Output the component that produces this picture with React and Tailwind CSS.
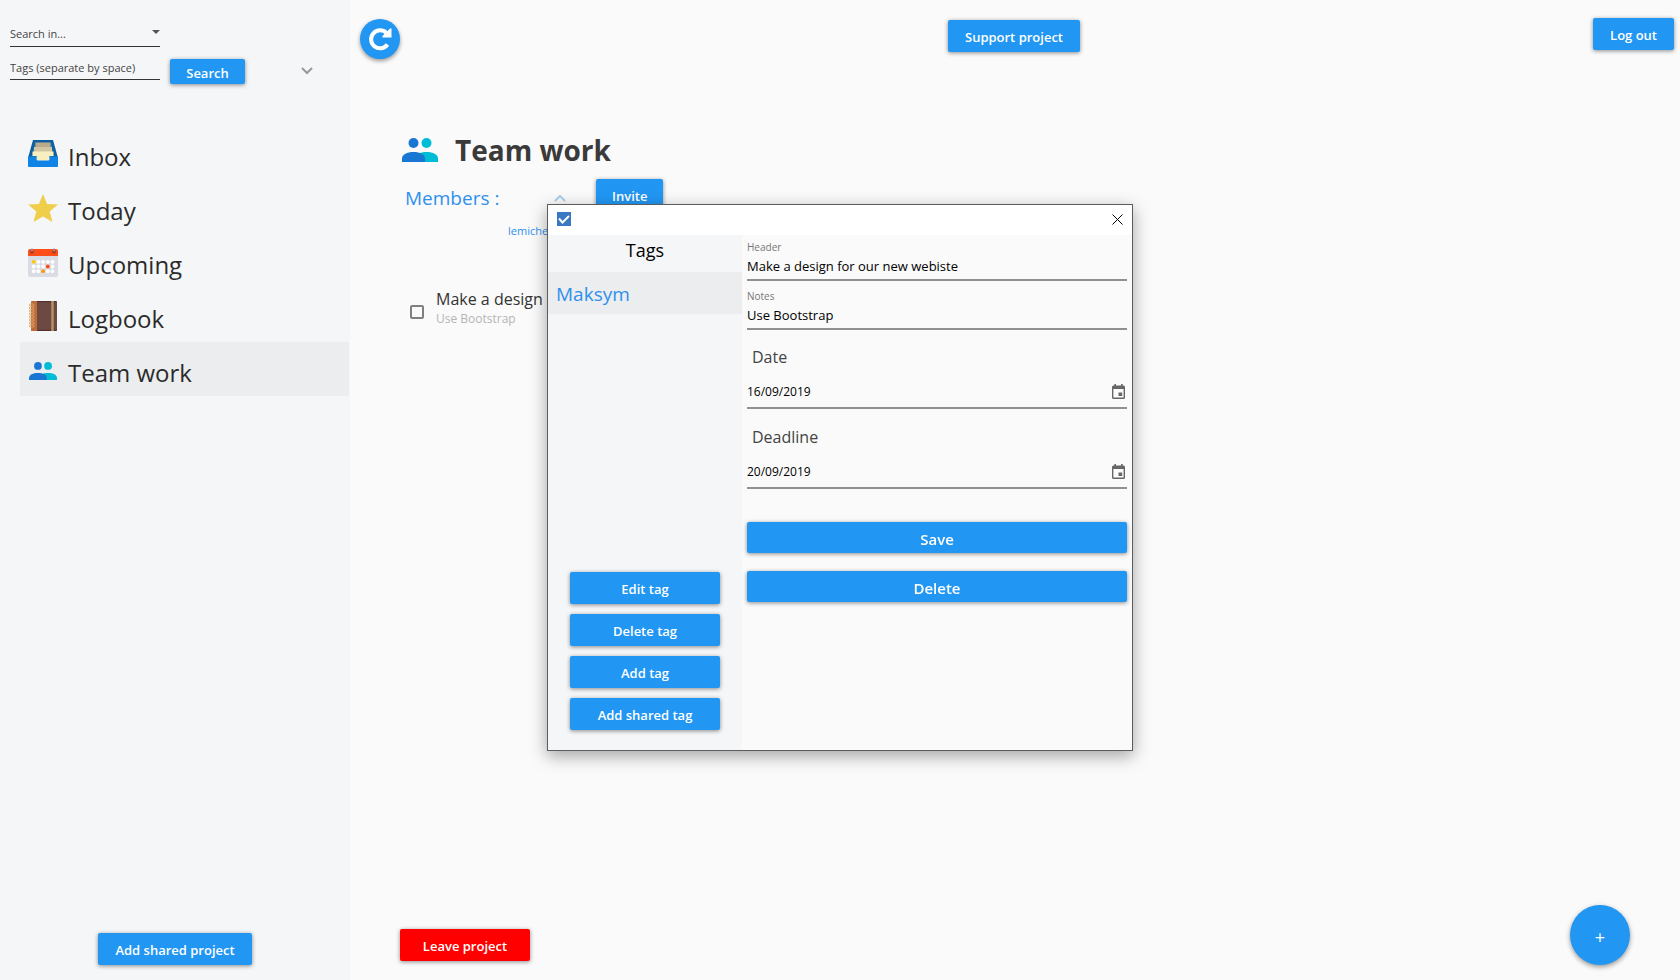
import React from "react";

function Button({ className = "", children }) {
  return (
    <button
      type="button"
      className={`flex items-center justify-center rounded-xs pt-1 font-semibold text-white shadow-[0_1px_4px_rgba(0,0,0,0.45)] ${className}`}
    >
      {children}
    </button>
  );
}

function InboxIcon() {
  return (
    <svg viewBox="0 0 30 30" className="mt-0.5 size-[30px] shrink-0" aria-hidden="true">
      <path d="M5 1h20l5 18H0z" fill="#0f5f9c" />
      <path d="M7 3.500h16l3.500 14h-23z" fill="#2b78ae" />
      <path d="M7.500 3.500h15v6h-15z" fill="#b9ab8c" />
      <path d="M6 8h18v6H6z" fill="#d2c5a2" />
      <path d="M4.500 12.500h21v4.500h-4v4.500h-13V17h-4z" fill="#f8efc0" />
      <path d="M0 17.500h8.500v2.500q0 1.500 1.500 1.500h10q1.500 0 1.500-1.500v-2.500H30V27q0 1-1 1H1q-1 0-1-1z" fill="#0f83e6" />
    </svg>
  );
}

function StarIcon() {
  return (
    <svg viewBox="0 0 30 30" className="mt-0.5 size-[30px] shrink-0" aria-hidden="true">
      <path d="M15 1l4.100 9.900L30 11.500l-8.300 7.100L24.500 29 15 23.400 5.500 29l2.800-10.400L0 11.500l10.900-.6z" fill="#efce4a" />
    </svg>
  );
}

function CalendarIcon() {
  const highlighted = { "0-0": "#ffc800", "1-3": "#ff4a1c", "2-2": "#ff9811" };
  const dots = [];
  for (let r = 0; r < 3; r++)
    for (let c = 0; c < 5; c++)
      dots.push(
        <circle
          key={`${r}-${c}`}
          cx={5.7 + c * 4.7}
          cy={14.8 + r * 4.7}
          r="1.900"
          fill={highlighted[`${r}-${c}`] || "#fff"}
        />
      );
  return (
    <svg viewBox="0 0 30 30" className="mt-0.5 size-[30px] shrink-0" aria-hidden="true">
      <path d="M0 8h30v20q0 2-2 2H2q-2 0-2-2z" fill="#d9dce2" />
      <path d="M0 9V4q0-2 2-2h26q2 0 2 2v5z" fill="#ff4f19" />
      <circle cx="4" cy="4.800" r="1.900" fill="#a43a20" />
      <circle cx="26" cy="4.800" r="1.900" fill="#a43a20" />
      <path d="M4 1.500v3M26 1.500v3" stroke="#8d9ba8" strokeWidth="1.600" />
      {dots}
    </svg>
  );
}

function BookIcon() {
  return (
    <svg viewBox="0 0 30 30" className="mt-0.5 size-[30px] shrink-0" aria-hidden="true">
      <rect x="3" y="0" width="26" height="30" rx="1.500" fill="#6d4a41" />
      <path d="M4.500 0H9v30H4.500Q3 30 3 28.500v-27Q3 0 4.500 0z" fill="#bf6a39" />
      <path d="M9 0h18.500Q29 0 29 1.200H9zM9 28.800h20q0 1.200-1.500 1.200H9z" fill="#54322c" />
      <path d="M23.200 0h2.600v30h-2.600z" fill="#b58e62" />
      {[4, 7, 10, 13, 16, 19, 22, 25].map((y) => (
        <ellipse key={y} cx="3.700" cy={y} rx="2.500" ry="1.200" fill="none" stroke="#d9a765" strokeWidth=".9" />
      ))}
    </svg>
  );
}

function PeopleIcon({ className }) {
  return (
    <svg viewBox="0 0 36 24" className={`shrink-0 ${className}`} aria-hidden="true">
      <circle cx="24.500" cy="5" r="5" fill="#00bcd4" />
      <path d="M13 24v-3.500c0-4 5-6.500 11.500-6.500S36 16.500 36 20.500V24z" fill="#00bcd4" />
      <circle cx="11.500" cy="5" r="5" fill="#1976d2" />
      <path d="M0 24v-3.500C0 16.500 5 14 11.500 14S23 16.500 23 20.500V24z" fill="#1976d2" />
    </svg>
  );
}

function Chevron({ up, className = "" }) {
  return (
    <svg viewBox="0 0 12 8" className={`h-2 w-3 ${className}`} fill="none" stroke="currentColor" strokeWidth="2" aria-hidden="true">
      <path d={up ? "M1 7l5-5 5 5" : "M1 1l5 5 5-5"} />
    </svg>
  );
}

const projects = [
  { name: "Inbox", icon: <InboxIcon /> },
  { name: "Today", icon: <StarIcon /> },
  { name: "Upcoming", icon: <CalendarIcon /> },
  { name: "Logbook", icon: <BookIcon /> },
  { name: "Team work", icon: <PeopleIcon className="mx-px mt-1 w-7" />, selected: true },
];

function Sidebar() {
  return (
    <aside className="flex w-[350px] shrink-0 flex-col bg-[#f5f6f8]">
      <form className="flex flex-col pl-2.5 pt-5 text-[11px] text-[#444]">
        <div className="relative w-[150px]">
          <select aria-label="Search in" className="h-[27px] w-full appearance-none border-b border-[#333] bg-transparent pt-0.5">
            <option>Search in...</option>
          </select>
          <svg viewBox="0 0 8 4" className="pointer-events-none absolute right-0 top-2.5 h-1 w-2" aria-hidden="true">
            <path d="M0 0h8L4 4z" fill="#555" />
          </svg>
        </div>
        <div className="mt-3 flex items-start">
          <input
            aria-label="Tags"
            placeholder="Tags (separate by space)"
            className="h-[21px] w-[150px] border-b border-[#333] bg-transparent pb-1 placeholder:text-[#444]"
          />
          <Button className="ml-2.5 h-[25px] w-[75px] bg-[#2196f3] text-[13px]">Search</Button>
          <button type="button" aria-label="Expand search" className="ml-14 mt-2 text-[#999]">
            <Chevron />
          </button>
        </div>
      </form>
      <nav className="mt-[42px] pl-5">
        {projects.map((p) => (
          <a
            key={p.name}
            href="#"
            className={`flex h-[54px] items-center gap-2.5 pl-2 text-2xl text-[#2b2b2b] ${p.selected ? "mr-px bg-[#ecedef]" : ""}`}
          >
            {p.icon}
            <span className="pt-2">{p.name}</span>
          </a>
        ))}
      </nav>
      <Button className="mb-[15px] mt-auto h-8 self-center bg-[#2196f3] px-[17px] text-[13px]">Add shared project</Button>
    </aside>
  );
}

function Field({ id, label, value }) {
  return (
    <div className="flex flex-col border-b-2 border-[#909090]">
      <label htmlFor={id} className="text-[10px] leading-4 text-[#777]">
        {label}
      </label>
      <input id={id} defaultValue={value} className="h-6 bg-transparent pb-0.5 text-[13px] text-black" />
    </div>
  );
}

function DateField({ id, label, value }) {
  return (
    <div>
      <label htmlFor={id} className="block pl-[5px] text-base leading-6 text-[#444]">
        {label}
      </label>
      <div className="mt-3 flex h-7 items-start border-b-2 border-[#909090]">
        <input id={id} defaultValue={value} className="h-5 min-w-0 flex-1 bg-transparent text-xs text-black" />
        <button type="button" aria-label={`Pick ${label.toLowerCase()}`} className="mr-0.5 mt-[3px]">
          <svg viewBox="0 0 13 15" className="h-[15px] w-[13px]" aria-hidden="true">
            <path d="M2.300 0h1.600v1.500h5.200V0h1.600v1.500h.8q1.500 0 1.500 1.500v10.500q0 1.500-1.500 1.500h-10Q0 15 0 13.500V3q0-1.500 1.500-1.500h.8zM1.400 5v8.600h10.200V5z" fill="#666" fillRule="evenodd" />
            <path d="M6.500 8.500h3.700V12H6.500z" fill="#666" />
          </svg>
        </button>
      </div>
    </div>
  );
}

function TaskDialog() {
  return (
    <div className="fixed inset-0 flex items-center justify-center pb-[25px]">
      <section
        role="dialog"
        aria-label="Edit task"
        className="flex h-[547px] w-[586px] flex-col border border-[#5c5c5c] bg-white shadow-[0_5px_16px_rgba(0,0,0,0.35)]"
      >
        <header className="flex h-[30px] shrink-0 items-center justify-between px-[9px] pb-0.5">
          <svg viewBox="0 0 14 14" className="size-3.5" aria-hidden="true">
            <path d="M0 0h14v14H0z" fill="#3b78c3" />
            <path d="M2 6.500l3.500 4L12 4" fill="none" stroke="#fff" strokeWidth="1.900" />
          </svg>
          <button type="button" aria-label="Close">
            <svg viewBox="0 0 11 11" className="size-[11px]" fill="none" stroke="#000" strokeWidth="1" aria-hidden="true">
              <path d="M.5.5l10 10M10.500.5l-10 10" />
            </svg>
          </button>
        </header>
        <div className="flex min-h-0 flex-1">
          <div className="flex w-[194px] flex-col bg-[#f5f6f8]">
            <h2 className="h-[37px] text-center text-lg leading-[30px] text-black">Tags</h2>
            <div className="h-[42px] bg-[#ecedef] pl-2 pt-0.5 text-[19px] leading-10 text-[#2e90ee]">Maksym</div>
            <div className="mx-[22px] mb-5 mt-auto flex flex-col gap-2.5 text-[13px]">
              {["Edit tag", "Delete tag", "Add tag", "Add shared tag"].map((t) => (
                <Button key={t} className="h-8 bg-[#2196f3]">{t}</Button>
              ))}
            </div>
          </div>
          <form className="flex flex-1 flex-col bg-[#fafafa] px-[5px] pt-1">
            <div className="flex flex-col gap-[7px]">
              <Field id="header" label="Header" value="Make a design for our new webiste" />
              <Field id="notes" label="Notes" value="Use Bootstrap" />
            </div>
            <div className="mt-[15px] flex flex-col gap-4">
              <DateField id="date" label="Date" value="16/09/2019" />
              <DateField id="deadline" label="Deadline" value="20/09/2019" />
            </div>
            <div className="mt-[33px] flex flex-col gap-[18px] text-[15px]">
              <Button className="h-[31px] bg-[#2196f3]">Save</Button>
              <Button className="h-[31px] bg-[#2196f3]">Delete</Button>
            </div>
          </form>
        </div>
      </section>
    </div>
  );
}

export default function App() {
  return (
    <div className="flex min-h-screen bg-[#fafafa] font-['Segoe_UI','Open_Sans','Noto_Sans',sans-serif]">
      <Sidebar />
      <main className="flex min-w-0 flex-1 flex-col">
        <header className="grid grid-cols-[1fr_auto_1fr] items-start pl-2.5 pr-1.5 pt-[18px] text-[13px]">
          <button
            type="button"
            aria-label="Refresh"
            className="mt-px flex size-10 items-center justify-center rounded-full bg-[#2196f3] shadow-[0_2px_4px_rgba(0,0,0,0.4)]"
          >
            <svg viewBox="0 0 24 24" className="size-6" aria-hidden="true">
              <path d="M19.500 17.500A9 9 0 1 1 18.500 6" fill="none" stroke="#fff" strokeWidth="4" />
              <path d="M23.500 1.500V10.500H14.500V9L22 1.500z" fill="#fff" />
            </svg>
          </button>
          <Button className="mr-1.5 mt-0.5 h-8 bg-[#2196f3] px-[17px]">Support project</Button>
          <Button className="h-8 justify-self-end bg-[#2196f3] px-[17px]">Log out</Button>
        </header>
        <div className="mt-[69px] flex items-center gap-[17px] pl-[52px]">
          <PeopleIcon className="w-9" />
          <h1 className="text-[28px] font-bold leading-[44px] text-[#3a3a3a]">Team work</h1>
        </div>
        <div className="mt-[7px] flex items-start pl-[55px]">
          <div className="w-[161px]">
            <div className="flex items-center justify-between pt-[5px]">
              <h2 className="text-[19px] leading-7 text-[#2e90ee]">Members :</h2>
              <button type="button" aria-label="Collapse members" className="text-[#a9cfee]">
                <Chevron up />
              </button>
            </div>
            <p className="mt-[9px] pl-[103px] text-[11px] leading-5 text-[#2e90ee]">lemiche</p>
          </div>
          <Button className="ml-[30px] h-8 bg-[#2196f3] px-4 text-[13px]">Invite</Button>
        </div>
        <div className="mt-[46px] flex items-start pl-[60px]">
          <input
            id="task"
            type="checkbox"
            className="mt-[18px] size-3.5 appearance-none rounded-xs border-2 border-[#808080]"
          />
          <label htmlFor="task" className="ml-3">
            <span className="block text-base leading-6 text-[#333]">Make a design</span>
            <span className="block text-xs leading-4 text-[#b5b5b5]">Use Bootstrap</span>
          </label>
        </div>
        <footer className="mb-[15px] mt-auto flex items-end justify-between pl-[50px] pr-[50px]">
          <Button className="mb-1 h-8 w-[130px] bg-[#f00] text-[13px]">Leave project</Button>
          <button
            type="button"
            aria-label="Add task"
            className="flex size-[60px] items-center justify-center rounded-full bg-[#2196f3] pt-1 text-lg text-white shadow-[0_2px_5px_rgba(0,0,0,0.4)]"
          >
            +
          </button>
        </footer>
      </main>
      <TaskDialog />
    </div>
  );
}
